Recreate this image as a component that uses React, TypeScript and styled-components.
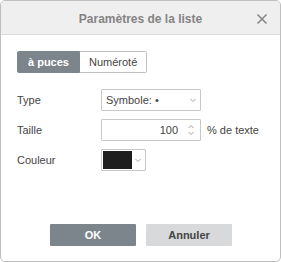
import React, { useState } from 'react';
import styled, { createGlobalStyle } from 'styled-components';

const GlobalStyle = createGlobalStyle`
  html, body {
    margin: 0;
    padding: 0;
    background: #ffffff;
  }
  body {
    font-family: "Liberation Sans", Arial, sans-serif;
    font-size: 11px;
    color: #444444;
  }
`;

const Dialog = styled.div`
  box-sizing: border-box;
  width: 281px;
  height: 262px;
  border: 1px solid #bfbfbf;
  border-radius: 5px;
  background: #ffffff;
  display: flex;
  flex-direction: column;
  overflow: hidden;
`;

const Header = styled.div`
  position: relative;
  height: 33px;
  background: #efefef;
  border-bottom: 1px solid #dadada;
  display: flex;
  align-items: center;
  justify-content: center;
`;

const Title = styled.span`
  font-size: 12px;
  font-weight: bold;
  color: #848484;
  margin-top: 2px;
`;

const CloseButton = styled.button`
  position: absolute;
  right: 12px;
  top: 12px;
  width: 12px;
  height: 12px;
  padding: 0;
  border: none;
  background: transparent;
  display: flex;
`;

const Body = styled.div`
  flex: 1;
  display: flex;
  flex-direction: column;
  padding: 16px 16px 15px 16px;
`;

const Tabs = styled.div`
  display: flex;
`;

const Tab = styled.button<{ $active?: boolean }>`
  box-sizing: border-box;
  height: 22px;
  padding: 0 ${p => (p.$active ? 10 : 9)}px;
  font-family: "Liberation Sans", Arial, sans-serif;
  font-size: 11px;
  font-weight: ${p => (p.$active ? 'bold' : 'normal')};
  color: ${p => (p.$active ? '#ffffff' : '#444444')};
  background: ${p => (p.$active ? '#7d858c' : '#ffffff')};
  border: 1px solid ${p => (p.$active ? '#7d858c' : '#c0c0c0')};
  border-left-width: ${p => (p.$active ? 1 : 0)}px;
  border-radius: ${p => (p.$active ? '2px 0 0 2px' : '0 2px 2px 0')};
  cursor: pointer;
`;

const Form = styled.div`
  display: flex;
  flex-direction: column;
  gap: 8px;
  margin-top: 16px;
`;

const Row = styled.div`
  display: flex;
  align-items: center;
  height: 22px;
`;

const Label = styled.span`
  width: 84px;
`;

const Field = styled.div<{ $width: number }>`
  box-sizing: border-box;
  width: ${p => p.$width}px;
  height: 22px;
  border: 1px solid #c8c8c8;
  border-radius: 1px;
  display: flex;
  align-items: center;
`;

const FieldText = styled.span<{ $right?: boolean }>`
  flex: 1;
  padding: 0 4px;
  text-align: ${p => (p.$right ? 'right' : 'left')};
  color: #444444;
`;

const Arrow = styled.span`
  width: 14px;
  display: flex;
  align-items: center;
  justify-content: center;
`;

const Spinner = styled.span`
  width: 18px;
  display: flex;
  flex-direction: column;
  align-items: center;
  gap: 4px;
`;

const Swatch = styled.span<{ $color: string }>`
  width: 31px;
  height: 18px;
  margin-left: 1px;
  background: ${p => p.$color};
`;

const Unit = styled.span`
  margin-left: 6px;
`;

const Footer = styled.div`
  margin-top: auto;
  display: flex;
  justify-content: center;
  gap: 10px;
  padding-left: 1px;
`;

const ActionButton = styled.button<{ $primary?: boolean }>`
  width: 86px;
  height: 22px;
  border: none;
  border-radius: 1px;
  font-family: "Liberation Sans", Arial, sans-serif;
  font-size: 11px;
  font-weight: bold;
  color: ${p => (p.$primary ? '#ffffff' : '#444444')};
  background: ${p => (p.$primary ? '#7d858c' : '#d8d9db')};
  cursor: pointer;
`;

const Chevron = ({ up }: { up?: boolean }) => (
  <svg width="6" height="3" viewBox="0 0 6 3">
    <path
      d={up ? 'M0.5 3 L3 0.5 L5.5 3' : 'M0.5 0 L3 2.5 L5.5 0'}
      fill="none"
      stroke="#9a9a9a"
      strokeWidth="0.9"
    />
  </svg>
);

export default function App() {
  const [mode, setMode] = useState<'bullet' | 'number'>('bullet');

  return (
    <>
      <GlobalStyle />
      <Dialog>
        <Header>
          <Title>Paramètres de la liste</Title>
          <CloseButton aria-label="Fermer">
            <svg width="12" height="12" viewBox="0 0 12 12">
              <path d="M1.5 1.5 L10.5 10.5 M10.5 1.5 L1.5 10.5" stroke="#848484" strokeWidth="1.5" />
            </svg>
          </CloseButton>
        </Header>
        <Body>
          <Tabs>
            <Tab $active={mode === 'bullet'} onClick={() => setMode('bullet')}>à puces</Tab>
            <Tab $active={mode === 'number'} onClick={() => setMode('number')}>Numéroté</Tab>
          </Tabs>
          <Form>
            <Row>
              <Label>Type</Label>
              <Field $width={100}>
                <FieldText>Symbole: •</FieldText>
                <Arrow><Chevron /></Arrow>
              </Field>
            </Row>
            <Row>
              <Label>Taille</Label>
              <Field $width={100}>
                <FieldText $right>100</FieldText>
                <Spinner>
                  <Chevron up />
                  <Chevron />
                </Spinner>
              </Field>
              <Unit>% de texte</Unit>
            </Row>
            <Row>
              <Label>Couleur</Label>
              <Field $width={45}>
                <Swatch $color="#1e1e1e" />
                <Arrow><Chevron /></Arrow>
              </Field>
            </Row>
          </Form>
          <Footer>
            <ActionButton $primary>OK</ActionButton>
            <ActionButton>Annuler</ActionButton>
          </Footer>
        </Body>
      </Dialog>
    </>
  );
}
